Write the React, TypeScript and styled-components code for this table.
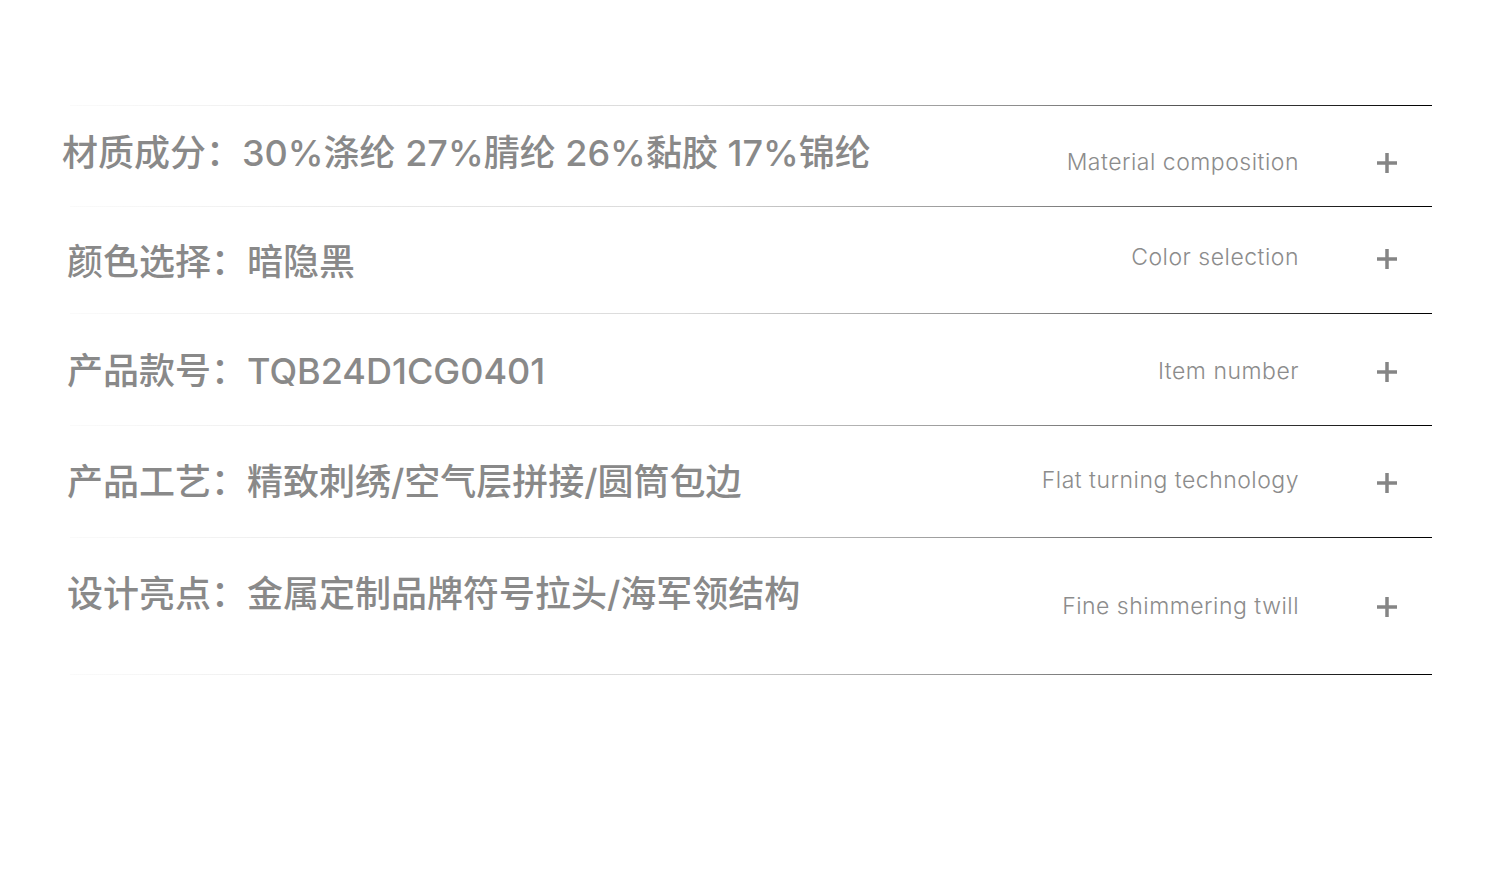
import styled, { createGlobalStyle } from 'styled-components';

const GlobalStyle = createGlobalStyle`
  html, body {
    margin: 0;
    padding: 0;
    background: #ffffff;
  }
  body {
    font-family: Inter, 'Noto Sans CJK SC', sans-serif;
  }
`;

const Page = styled.div`
  width: 1500px;
  height: 880px;
  padding-top: 105px;
  box-sizing: border-box;
  background: #ffffff;
`;

const Divider = styled.div`
  height: 1px;
  margin-left: 70px;
  width: 1362px;
  background: linear-gradient(90deg, rgba(0, 0, 0, 0.02) 0%, #d9d9d9 45%, #8c8c8c 70%, #000000 100%);
`;

const Row = styled.div<{ $height: number }>`
  width: 1397px;
  height: ${({ $height }) => $height}px;
  display: grid;
  grid-template-columns: 1fr auto auto;
  align-items: start;
`;

const Label = styled.div<{ $top: number; $left: number }>`
  padding-top: ${({ $top }) => $top}px;
  padding-left: ${({ $left }) => $left}px;
  font-family: Inter, 'Noto Sans CJK SC', sans-serif;
  font-size: 36px;
  line-height: 36px;
  font-weight: 500;
  color: #898989;
  white-space: nowrap;
`;

const EnglishName = styled.div<{ $top: number }>`
  padding-top: ${({ $top }) => $top}px;
  font-family: Inter, 'Noto Sans', sans-serif;
  font-size: 23px;
  line-height: 24px;
  font-weight: 300;
  letter-spacing: 0.5px;
  color: #8c8c8c;
  text-align: right;
  white-space: nowrap;
`;

const PlusWrap = styled.div<{ $top: number }>`
  padding-top: ${({ $top }) => $top}px;
  padding-left: 78px;
  display: flex;
`;

const PlusIcon = () => (
  <svg width="20" height="20" viewBox="0 0 20 20">
    <path d="M0 10H20M10 0V20" stroke="#858585" strokeWidth="3.5" fill="none" />
  </svg>
);

const specs = [
  { zh: '材质成分：30%涤纶 27%腈纶 26%黏胶 17%锦纶', en: 'Material composition', h: 100, top: 29, left: 62, enTop: 44, plusTop: 47 },
  { zh: '颜色选择：暗隐黑', en: 'Color selection', h: 106, top: 37, left: 67, enTop: 38, plusTop: 42 },
  { zh: '产品款号：TQB24D1CG0401', en: 'Item number', h: 111, top: 39, left: 67, enTop: 45, plusTop: 48 },
  { zh: '产品工艺：精致刺绣/空气层拼接/圆筒包边', en: 'Flat turning technology', h: 111, top: 38, left: 67, enTop: 42, plusTop: 47 },
  { zh: '设计亮点：金属定制品牌符号拉头/海军领结构', en: 'Fine shimmering twill', h: 136, top: 38, left: 67, enTop: 56, plusTop: 59 },
];

export default function App() {
  return (
    <Page>
      <GlobalStyle />
      <Divider />
      {specs.map((s) => (
        <div key={s.en}>
          <Row $height={s.h}>
            <Label $top={s.top} $left={s.left}>{s.zh}</Label>
            <EnglishName $top={s.enTop}>{s.en}</EnglishName>
            <PlusWrap $top={s.plusTop}>
              <PlusIcon />
            </PlusWrap>
          </Row>
          <Divider />
        </div>
      ))}
    </Page>
  );
}
